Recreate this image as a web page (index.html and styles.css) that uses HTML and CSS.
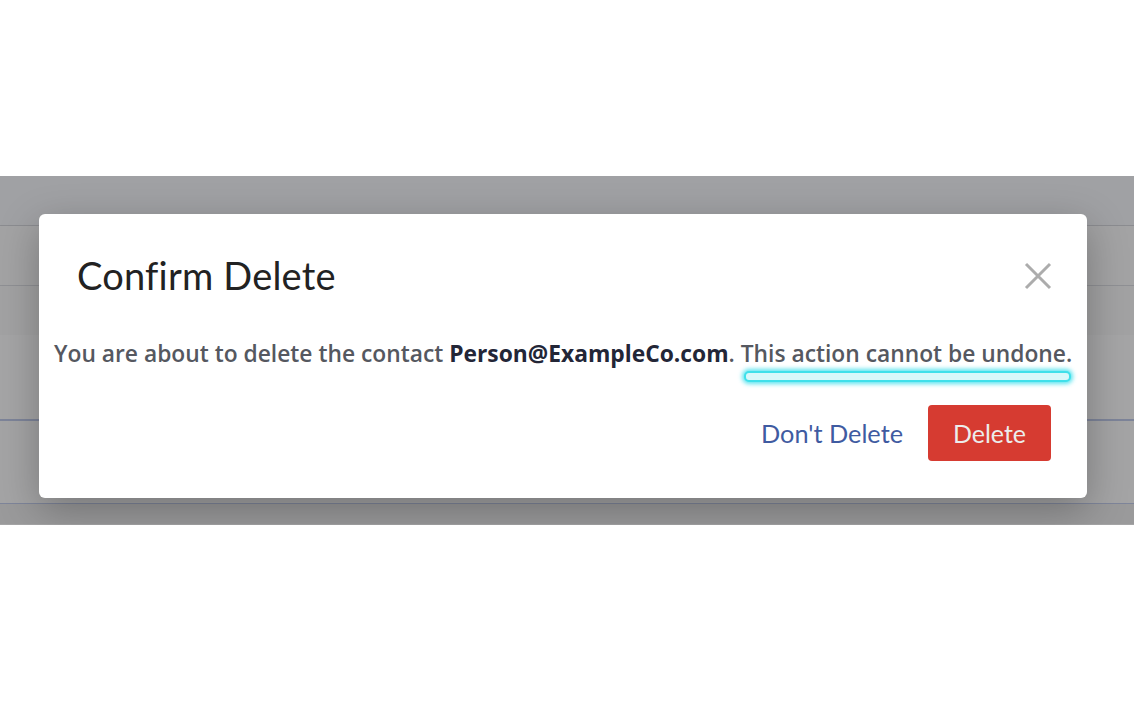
FILE: index.html
```html
<!DOCTYPE html>
<html>
<head>
<meta charset="utf-8">
<link rel="stylesheet" href="styles.css">
</head>
<body>
<div class="top"></div>
<div class="stage">
  <div class="bg-head"></div>
  <div class="bg-row r1"></div>
  <div class="bg-row r2"></div>
  <div class="bg-row r3"></div>
  <div class="bg-row r4"></div>
  <div class="bg-row r5"></div>
  <div class="modal">
    <div class="modal-head">
      <h1 class="title">Confirm Delete</h1>
      <svg class="close" width="28" height="28" viewBox="0 0 28 28"><path d="M2 2 L26 26 M26 2 L2 26" stroke="#acacac" stroke-width="3" fill="none"/></svg>
    </div>
    <p class="msg">You are about to delete the contact <b class="email">Person@ExampleCo.com</b>. <span class="warn">This action cannot be undone.</span></p>
    <div class="actions">
      <button class="link-btn">Don't Delete</button>
      <button class="danger-btn">Delete</button>
    </div>
  </div>
</div>
<div class="bottom"></div>
</body>
</html>
```
FILE: styles.css
```css
html, body { margin: 0; padding: 0; background: #fff; }
.top { height: 176px; background: #fff; }
.stage { position: relative; height: 349px; background: #a5a5a6; overflow: hidden; }
.bg-head { height: 50px; background: #a0a1a4; border-bottom: 1px solid #8b8c90; box-sizing: border-box; }
.bg-row { box-sizing: border-box; }
.r1 { height: 60px; border-bottom: 1px solid #8f9094; background: #a3a3a4; }
.r2 { height: 49px; background: #a2a2a3; }
.r3 { height: 86px; background: #a5a5a6; border-bottom: 2px solid #7d8499; }
.r4 { height: 83px; border-bottom: 1px solid #7e859a; background: #a4a4a5; }
.r5 { height: 20px; background: #9a9a9b; }
.modal {
  position: absolute; left: 39px; top: 38px; width: 1048px; height: 284px;
  background: #fff; border-radius: 6px; box-sizing: border-box;
  box-shadow: 0 12px 40px rgba(0,0,0,0.28);
  padding: 0 36px 0 15px;
  font-family: "Open Sans", "Noto Sans", sans-serif;
}
.modal-head { display: flex; justify-content: space-between; align-items: center; padding: 38px 0 0 23px; height: 46px; }
.title { margin: 0; font-family: Lato, "Noto Sans", sans-serif; font-weight: 400; font-size: 38px; color: #222; letter-spacing: 0.2px; line-height: 46px; }
.close { margin-right: -1px; margin-top: 2px; }
.msg { margin: 40px 0 0 0; font-size: 22.8px; line-height: 31px; font-weight: 600; color: #555860; white-space: nowrap; }
.email { font-weight: 700; color: #232637; }
.warn { position: relative; }
.warn::after {
  content: ""; position: absolute; left: 3px; right: 1px; top: 33px; height: 7px;
  background: #d8f8fa; border: 2px solid #3fe0ea; border-radius: 5px;
  box-shadow: 0 0 4px 2px rgba(40,220,235,0.75);
}
.actions { display: flex; justify-content: flex-end; align-items: center; gap: 25px; margin-top: 36px; }
.link-btn { background: none; border: 0; padding: 0; font-family: Lato, "Noto Sans", sans-serif; font-size: 25.3px; color: #3f5ba1; }
.danger-btn { width: 123px; height: 56px; background: #d63b31; border: 0; border-radius: 4px; color: #ececec; font-family: Lato, "Noto Sans", sans-serif; font-size: 25px; }
.bottom { height: 177px; background: #fff; }
```
